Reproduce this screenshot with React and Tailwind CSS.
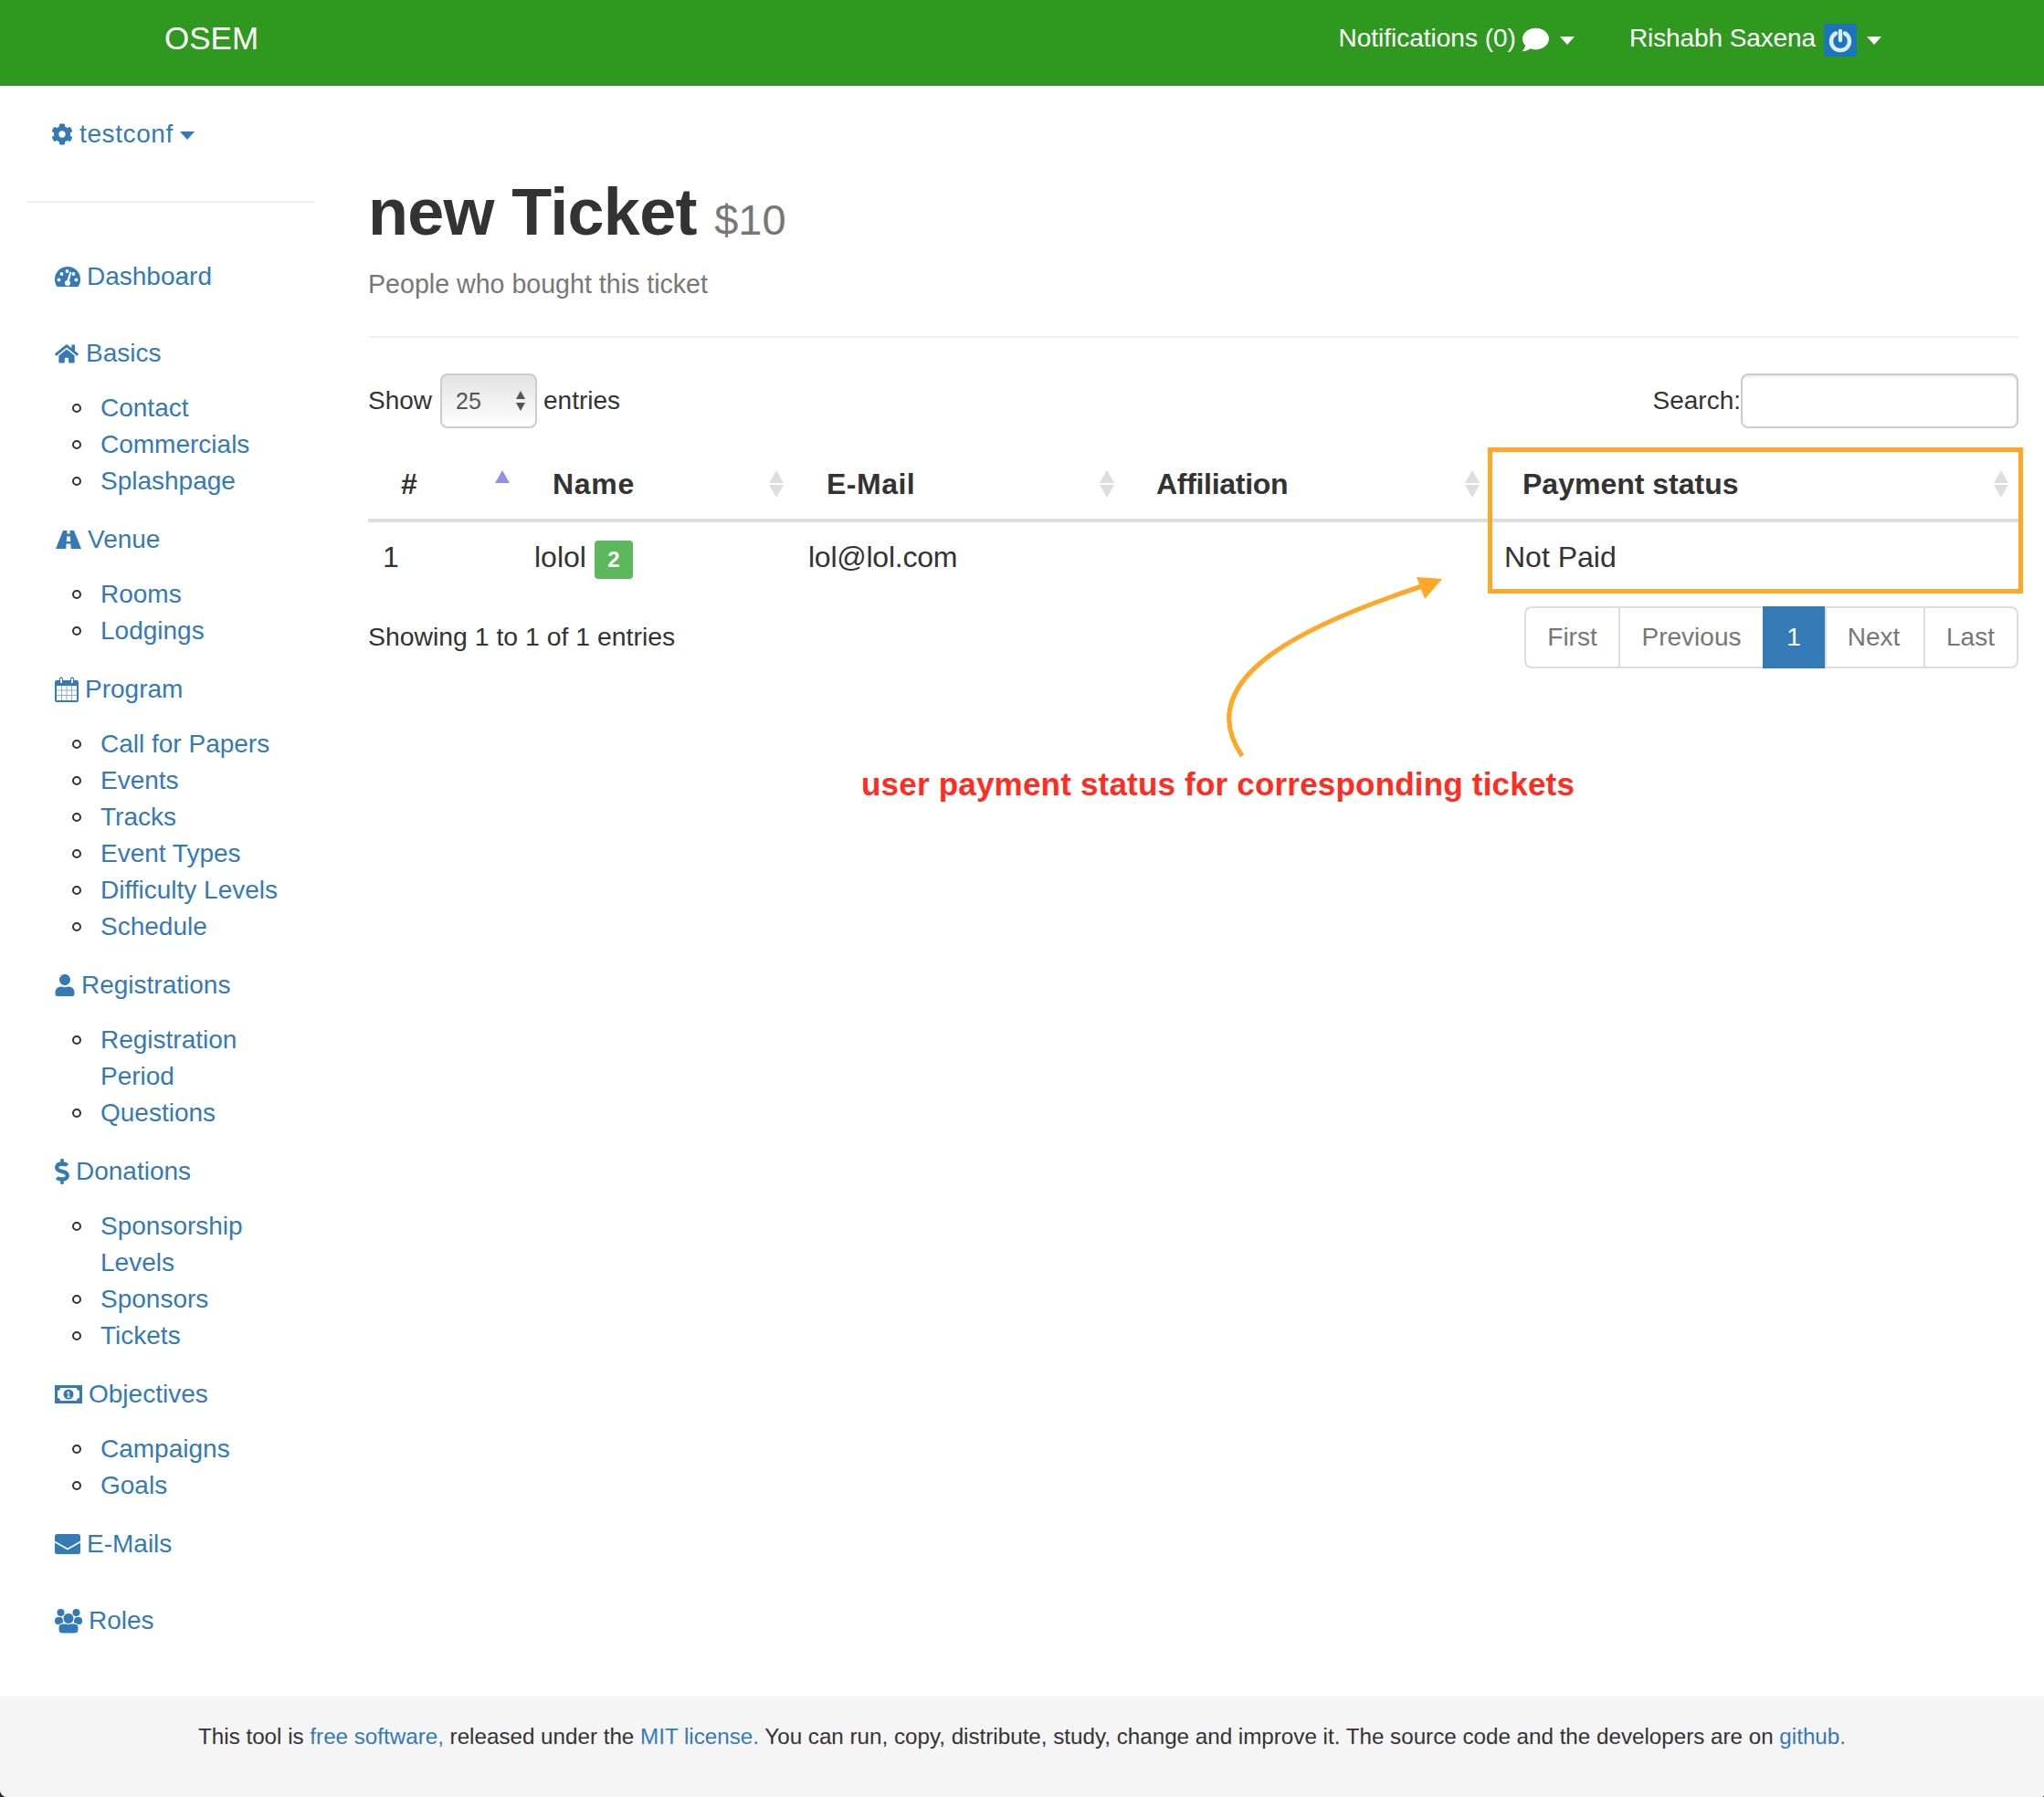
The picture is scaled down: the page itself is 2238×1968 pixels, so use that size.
import React from 'react';
import { FaCog, FaHome, FaUser, FaDollarSign, FaComment } from 'react-icons/fa';

const Caret = ({ className }) => (
    <svg viewBox="0 0 16 9" className={className} fill="currentColor">
        <path d="M0 0h16L8 9z" />
    </svg>
);

const GaugeIcon = ({ className }) => (
    <svg viewBox="0 0 28 22" className={className}>
        <path fill="currentColor" d="M2.500 22C.8 19.500 0 17 0 14a14 14 0 0 1 28 0c0 3-.8 5.500-2.500 8z" />
        <g fill="#ffffff">
            <circle cx="4.500" cy="14.500" r="1.900" />
            <circle cx="7.500" cy="8" r="1.900" />
            <circle cx="13.500" cy="5" r="1.900" />
            <circle cx="20.500" cy="8" r="1.900" />
            <circle cx="23.500" cy="14.500" r="1.900" />
            <circle cx="14" cy="18" r="3" />
            <path d="M16.500 5.500l1.800.5-2.800 11-2.500-.8z" />
        </g>
    </svg>
);

const RoadIcon = ({ className }) => (
    <svg viewBox="0 0 28 20" className={className} fill="currentColor">
        <path fillRule="evenodd" d="M8 0h4.500l-.2 3.500h3.400L15.500 0H20l8 20H16.700l-.3-5.500h-4.800L11.300 20H0zM12.100 6.500l-.3 5.500h4.400l-.3-5.500z" />
    </svg>
);

const CalendarIcon = ({ className }) => (
    <svg viewBox="0 0 26 28" className={className} fill="currentColor">
        <path fillRule="evenodd" d="M2 4h3V2.500a2 2 0 0 1 4 0V4h8V2.500a2 2 0 0 1 4 0V4h3a2 2 0 0 1 2 2v20a2 2 0 0 1-2 2H2a2 2 0 0 1-2-2V6a2 2 0 0 1 2-2zM2 10v16h22V10zM6 2v5h2V2zM18 2v5h2V2z" />
        <path d="M7 10h1v16H7zM12.500 10h1v16h-1zM18 10h1v16h-1zM2 14.500h22v1H2zM2 20h22v1H2z" opacity="0.6" />
    </svg>
);

const MoneyIcon = ({ className }) => (
    <svg viewBox="0 0 30 20" className={className} fill="currentColor">
        <path fillRule="evenodd" d="M0 0h30v20H0zM6 3C6 5 5 6 3 6v8c2 0 3 1 3 3h18c0-2 1-3 3-3V6c-2 0-3-1-3-3z" />
        <path fillRule="evenodd" d="M15 4.500a5.500 5.500 0 1 1 0 11 5.500 5.500 0 0 1 0-11zM13 8.500l1.500-1.500h1.300v5.500h1.200v1h-3.800v-1h1.300V8.500l-.7.700z" />
    </svg>
);

const EnvelopeIcon = ({ className }) => (
    <svg viewBox="0 0 28 22" className={className}>
        <rect width="28" height="22" rx="2.500" fill="currentColor" />
        <path d="M0 8.500l14 8 14-8" fill="none" stroke="#ffffff" strokeWidth="1.600" />
    </svg>
);

const UsersIcon = ({ className }) => (
    <svg viewBox="0 0 30 27" className={className} fill="currentColor">
        <circle cx="6.500" cy="4" r="4" />
        <circle cx="23.500" cy="4" r="4" />
        <rect x="0" y="9" width="9" height="8" rx="3.500" />
        <rect x="21" y="9" width="9" height="8" rx="3.500" />
        <rect x="4" y="16" width="22" height="11" rx="4" stroke="#ffffff" strokeWidth="1" />
        <circle cx="15" cy="10.500" r="6" stroke="#ffffff" strokeWidth="1" />
    </svg>
);

const sections = [
    { icon: GaugeIcon, iconClass: 'w-[28px] h-[22px] mr-[7px]', label: 'Dashboard' },
    { icon: FaHome, iconClass: 'w-[26px] h-[23px] mr-[8px]', label: 'Basics', items: [['Contact'], ['Commercials'], ['Splashpage']] },
    { icon: RoadIcon, iconClass: 'w-[28px] h-[20px] ml-[1px] mr-[7px]', label: 'Venue', items: [['Rooms'], ['Lodgings']] },
    { icon: CalendarIcon, iconClass: 'w-[26px] h-[28px] mr-[7px]', label: 'Program', items: [['Call for Papers'], ['Events'], ['Tracks'], ['Event Types'], ['Difficulty Levels'], ['Schedule']] },
    { icon: FaUser, iconClass: 'w-[22px] h-[24px] mr-[7px]', label: 'Registrations', items: [['Registration', 'Period'], ['Questions']] },
    { icon: FaDollarSign, iconClass: 'w-[16px] h-[28px] mr-[7px]', label: 'Donations', items: [['Sponsorship', 'Levels'], ['Sponsors'], ['Tickets']] },
    { icon: MoneyIcon, iconClass: 'w-[30px] h-[20px] mr-[7px]', label: 'Objectives', items: [['Campaigns'], ['Goals']] },
    { icon: EnvelopeIcon, iconClass: 'w-[28px] h-[22px] mr-[7px]', label: 'E-Mails' },
    { icon: UsersIcon, iconClass: 'w-[30px] h-[27px] mr-[7px]', label: 'Roles' },
];

const SortIcon = ({ asc }) => (
    <svg viewBox="0 0 16 30" className="w-[16px] h-[30px]">
        <path d="M8 0l8 14H0z" fill={asc ? '#8f92e4' : '#dedede'} />
        {!asc && <path d="M8 30L0 16h16z" fill="#dedede" />}
    </svg>
);

const Sidebar = () => (
    <aside className="w-[403px] shrink-0 pl-[30px] pr-[60px]">
        <div className="flex items-center h-[40px] mt-[33px] pl-[26px] text-[#337ab7]">
            <FaCog className="w-[24px] h-[24px] mr-[7px]" />
            <span className="tracking-[0.6px]">testconf</span>
            <Caret className="w-[16px] h-[9px] ml-[7px] mt-[2px]" />
        </div>
        <div className="h-[2px] bg-[#eeeeee] mt-[53px] mb-[61px]" />
        <nav className="pl-[30px] text-[#337ab7]">
            {sections.map((s) => {
                const Icon = s.icon;
                return (
                    <div key={s.label} className={s.items ? 'mb-[24px]' : 'mb-[44px]'}>
                        <div className="flex items-center h-[40px]">
                            <Icon className={s.iconClass} />
                            <span>{s.label}</span>
                        </div>
                        {s.items && (
                            <ul className="mt-[20px] pl-[19px]">
                                {s.items.map((lines) => (
                                    <li key={lines[0]} className="flex">
                                        <span className="w-[10px] h-[10px] mt-[15px] mr-[21px] shrink-0 rounded-full border-2 border-[#333333]" />
                                        <div>
                                            {lines.map((l) => <div key={l}>{l}</div>)}
                                        </div>
                                    </li>
                                ))}
                            </ul>
                        )}
                    </div>
                );
            })}
        </nav>
    </aside>
);

const pages = [
    { label: 'First', w: 'w-[103px] rounded-l-[8px]' },
    { label: 'Previous', w: 'w-[158px]' },
    { label: '1', w: 'w-[68px]', active: true },
    { label: 'Next', w: 'w-[108px] pr-[3px]' },
    { label: 'Last', w: 'w-[104px] pr-[1px] rounded-r-[8px] border-r-2' },
];

export default function App() {
    return (
        <div className="w-[2238px] h-[1968px] bg-[#2a2a2a]">
            <div className="relative w-[2238px] h-[1968px] bg-white overflow-hidden rounded-bl-[8px] rounded-br-[3px] text-[28px] leading-[40px] text-[#333333] font-['Liberation_Sans',Arial,sans-serif]">
                <header className="h-[94px] bg-[#2f991f] text-white flex items-center">
                    <div className="ml-[180px] text-[35px] leading-[40px] -mt-[10px]">OSEM</div>
                    <div className="ml-auto flex items-center -mt-[10px]">
                        <span>Notifications (0)</span>
                        <FaComment className="w-[29px] h-[29px] ml-[7px] mt-[3px]" />
                        <Caret className="w-[16px] h-[9px] ml-[12px] mt-[4px]" />
                        <span className="ml-[60px] tracking-[-0.1px]">Rishabh Saxena</span>
                        <div className="w-[36px] h-[36px] mt-[4px] ml-[9px] bg-[#1b75bb] flex items-center justify-center">
                            <svg viewBox="0 0 24 24" className="w-[30px] h-[30px]" fill="none" stroke="#d8eef0" strokeWidth="3.500" strokeLinecap="round">
                                <path d="M8 6a8 8 0 1 0 8 0M12 4v8" />
                            </svg>
                        </div>
                        <Caret className="w-[16px] h-[9px] ml-[11px] mr-[178px] mt-[4px]" />
                    </div>
                </header>

                <div className="flex h-[1763px]">
                    <Sidebar />
                    <main className="flex-1 pr-[28px]">
                        <div className="pt-[99px] border-b-2 border-[#eeeeee] h-[276px]">
                            <h1 className="text-[72px] leading-[79px] font-bold tracking-[-0.7px]">
                                new Ticket <small className="text-[47px] font-normal tracking-normal text-[#777777]">$10</small>
                            </h1>
                            <p className="text-[28.600px] text-[#777777] mt-[11px]">People who bought this ticket</p>
                        </div>

                        <div className="flex items-center justify-between mt-[39px] h-[60px]">
                            <div className="flex items-center">
                                <span>Show</span>
                                <div className="w-[106px] h-[60px] ml-[9px] mr-[7px] rounded-[8px] border-2 border-[#cccccc] bg-gradient-to-b from-[#e3e3e3] to-white flex items-center justify-between pl-[15px] pr-[10px] text-[25px] text-[#555555]">
                                    <span>25</span>
                                    <svg viewBox="0 0 12 22" className="w-[12px] h-[22px]" fill="#555555">
                                        <path d="M6 0l5 9H1zM6 22l-5-9h10z" />
                                    </svg>
                                </div>
                                <span>entries</span>
                            </div>
                            <div className="flex items-center">
                                <span>Search:</span>
                                <div className="w-[304px] h-[60px] rounded-[8px] border-2 border-[#cccccc] bg-white shadow-[inset_0_2px_2px_rgba(0,0,0,0.08)]" />
                            </div>
                        </div>

                        <div className="relative">
                            <table className="w-[1807px] mt-[21px] text-[32px] table-fixed">
                                <thead>
                                    <tr className="border-b-4 border-[#dddddd] h-[80px]">
                                        <th className="w-[165px] text-left font-bold pl-[36px] pt-[2px] relative">#<span className="absolute left-[139px] top-[25px]"><SortIcon asc /></span></th>
                                        <th className="w-[300px] text-left font-bold pl-[37px] pt-[2px] tracking-[0.7px] relative">Name<span className="absolute right-[10px] top-[25px]"><SortIcon /></span></th>
                                        <th className="w-[362px] text-left font-bold pl-[37px] pt-[2px] tracking-[0.5px] relative">E-Mail<span className="absolute right-[10px] top-[25px]"><SortIcon /></span></th>
                                        <th className="w-[400px] text-left font-bold pl-[36px] pt-[2px] tracking-[-0.3px] relative">Affiliation<span className="absolute right-[10px] top-[25px]"><SortIcon /></span></th>
                                        <th className="text-left font-bold pl-[37px] pt-[2px] relative">Payment status<span className="absolute right-[11px] top-[25px]"><SortIcon /></span></th>
                                    </tr>
                                </thead>
                                <tbody>
                                    <tr className="h-[78px]">
                                        <td className="pl-[16px]">1</td>
                                        <td className="pl-[17px]">
                                            <div className="flex items-center">
                                                <span>lolol</span>
                                                <span className="w-[42px] h-[42px] mt-[5px] ml-[9px] rounded-[4px] bg-[#5cb85c] text-white text-[24px] leading-[42px] font-bold text-center">2</span>
                                            </div>
                                        </td>
                                        <td className="pl-[17px] tracking-[-0.25px]">lol@lol.com</td>
                                        <td />
                                        <td className="pl-[17px]">Not Paid</td>
                                    </tr>
                                </tbody>
                            </table>
                            {/* annotation box drawn over the table */}
                            <div className="absolute left-[1226px] top-0 w-[586px] h-[160px] border-[5px] border-[#ffa726]" />
                        </div>

                        <div className="flex items-start justify-between mt-[16px]">
                            <span className="mt-[13px] text-[28.400px]">Showing 1 to 1 of 1 entries</span>
                            <div className="flex h-[68px]">
                                {pages.map((p) => (
                                    <div
                                        key={p.label}
                                        className={`${p.w} flex items-center justify-center border-y-2 ${p.active ? 'bg-[#337ab7] border-[#337ab7] text-white' : 'border-[#dddddd] text-[#777777] border-l-2'}`}
                                    >
                                        {p.label}
                                    </div>
                                ))}
                            </div>
                        </div>
                    </main>
                </div>

                <footer className="h-[111px] bg-[#f5f5f5] pt-[25px] text-center text-[24.200px]">
                    This tool is <span className="text-[#337ab7]">free software,</span> released under the <span className="text-[#337ab7]">MIT license.</span> You can run, copy, distribute, study, change and improve it. The source code and the developers are on <span className="text-[#337ab7]">github.</span>
                </footer>

                {/* hand-drawn arrow and note on top of the screenshot */}
                <svg viewBox="0 0 2238 1968" className="absolute inset-0 w-[2238px] h-[1968px] pointer-events-none" fill="none">
                    <path d="M1360 828C1300 740 1440 680 1560 641" stroke="#ffa726" strokeWidth="5" />
                    <path d="M1579 634L1551 632L1560 656Z" fill="#ffa726" />
                </svg>
                <div className="absolute left-[943px] top-[839px] text-[35px] leading-[40px] font-bold text-[#ff2d1f] tracking-[0.2px]">
                    user payment status for corresponding tickets
                </div>
            </div>
        </div>
    );
}
